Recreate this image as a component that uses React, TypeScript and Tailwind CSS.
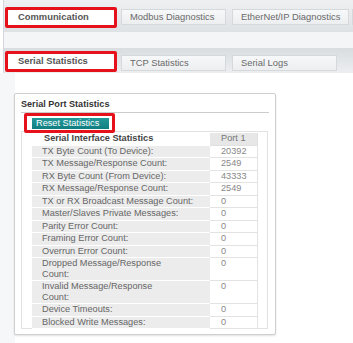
const rows: { label: string[]; value: string }[] = [
  { label: ['TX Byte Count (To Device):'], value: '20392' },
  { label: ['TX Message/Response Count:'], value: '2549' },
  { label: ['RX Byte Count (From Device):'], value: '43333' },
  { label: ['RX Message/Response Count:'], value: '2549' },
  { label: ['TX or RX Broadcast Message Count:'], value: '0' },
  { label: ['Master/Slaves Private Messages:'], value: '0' },
  { label: ['Parity Error Count:'], value: '0' },
  { label: ['Framing Error Count:'], value: '0' },
  { label: ['Overrun Error Count:'], value: '0' },
  { label: ['Dropped Message/Response', 'Count:'], value: '0' },
  { label: ['Invalid Message/Response', 'Count:'], value: '0' },
  { label: ['Device Timeouts:'], value: '0' },
  { label: ['Blocked Write Messages:'], value: '0' },
]

function Tab({ label, width }: { label: string; width: string }) {
  return (
    <div className={`${width} h-[16px] flex items-center pl-[8px] bg-gradient-to-b from-[#f7f8f9] to-[#eceef0] border border-[#d6d9dc] text-[9.4px] text-[#6a6a6a] whitespace-nowrap`}>
      {label}
    </div>
  )
}

function ActiveTab({ label }: { label: string }) {
  return (
    <div className="w-[112px] h-[21px] flex items-center pl-[10px] bg-white border-[3px] border-[#e5121c] rounded-[2px] text-[9.4px] font-bold text-[#555] whitespace-nowrap">
      {label}
    </div>
  )
}

export default function App() {
  return (
    <div className="w-[353px] h-[343px] bg-white overflow-hidden font-['Liberation_Sans',Arial,sans-serif] flex flex-col">
      <div className="bg-[#eceef0] pt-[7px] pb-[2px] h-[32px] bg-gradient-to-b from-[#eef0f2] to-[#dfe2e5] border-l border-[#d3d7db] ml-[3px]">
        <div className="flex items-start">
          <div className="ml-[1px]"><ActiveTab label="Communication" /></div>
          <div className="ml-[4px] mt-[2px]"><Tab label="Modbus Diagnostics" width="w-[105px]" /></div>
          <div className="ml-[6px] mt-[2px]"><Tab label="EtherNet/IP Diagnostics" width="w-[117px]" /></div>
          <div className="ml-[3px] mt-[2px] w-[10px] h-[16px] bg-[#f3f4f5] border border-[#d6d9dc]" />
        </div>
      </div>
      <div className="h-[16px] bg-[#f3f5f7] border-l border-[#d3d7db] ml-[3px]" />
      <div className="h-[25px] bg-gradient-to-b from-[#d9dde0] to-[#eceef0] border-l border-[#d3d7db] ml-[3px] flex items-start pt-[3px]">
        <div className="ml-[1px]"><ActiveTab label="Serial Statistics" /></div>
        <div className="ml-[4px] mt-[4px]"><Tab label="TCP Statistics" width="w-[105px]" /></div>
        <div className="ml-[6px] mt-[4px]"><Tab label="Serial Logs" width="w-[105px]" /></div>
      </div>
      <div className="flex-1 flex bg-[#f5f7f9]">
        <div className="w-[15px]" />
        <div className="flex-1 bg-white pt-[20px] pr-[77px]">
          <div className="ml-[-1px] w-[262px] h-[242px] border border-[#cfcfcf] rounded-[2px] shadow-[0_1px_2px_rgba(0,0,0,0.12)] bg-white px-[6px] pt-[4px]">
            <div className="text-[9.1px] font-bold text-[#333] leading-[12px] h-[15px] border-b border-[#cccccc] mr-[0px]">Serial Port Statistics</div>
            <div className="ml-[3px] w-[91px] h-[20px] border-[3px] border-[#e5121c] rounded-[2px] flex items-center pl-[5px] relative z-10 bg-white">
              <div className="w-[77px] h-[11px] bg-gradient-to-b from-[#23999a] to-[#0f7e80] text-white text-[9.2px] leading-[11px] pl-[4px] whitespace-nowrap">Reset Statistics</div>
            </div>
            <div className="mt-[-2px] w-[247px] h-[198px] border border-[#e2e2e2] pl-[10px] pt-[1px]">
              <table className="border-collapse text-[9.2px]">
                <tbody>
                  <tr>
                    <td className="w-[178px] pl-[12px] leading-[11.5px] font-bold text-[#444] bg-white border-b border-white">Serial Interface Statistics</td>
                    <td className="w-[47px] pl-[11px] leading-[11.5px] text-[#777] bg-[#e7e7e7] border-b border-[#e0e0e0] border-r">Port 1</td>
                  </tr>
                  {rows.map((r, i) => (
                    <tr key={i}>
                      <td className={`pl-[10px] ${r.label.length > 1 ? 'leading-[10.5px] pb-[1px]' : 'leading-[11.5px]'} text-[#666] bg-[#ececec] border-b border-white align-top`}>
                        {r.label.map((l, j) => <div key={j}>{l}</div>)}
                      </td>
                      <td className={`pl-[11px] ${r.label.length > 1 ? 'leading-[10.5px] pb-[1px]' : 'leading-[11.5px]'} text-[#888] bg-white border-b border-r border-[#e3e3e3] align-top`}>
                        {r.value}
                      </td>
                    </tr>
                  ))}
                </tbody>
              </table>
            </div>
          </div>
        </div>
      </div>
    </div>
  )
}
